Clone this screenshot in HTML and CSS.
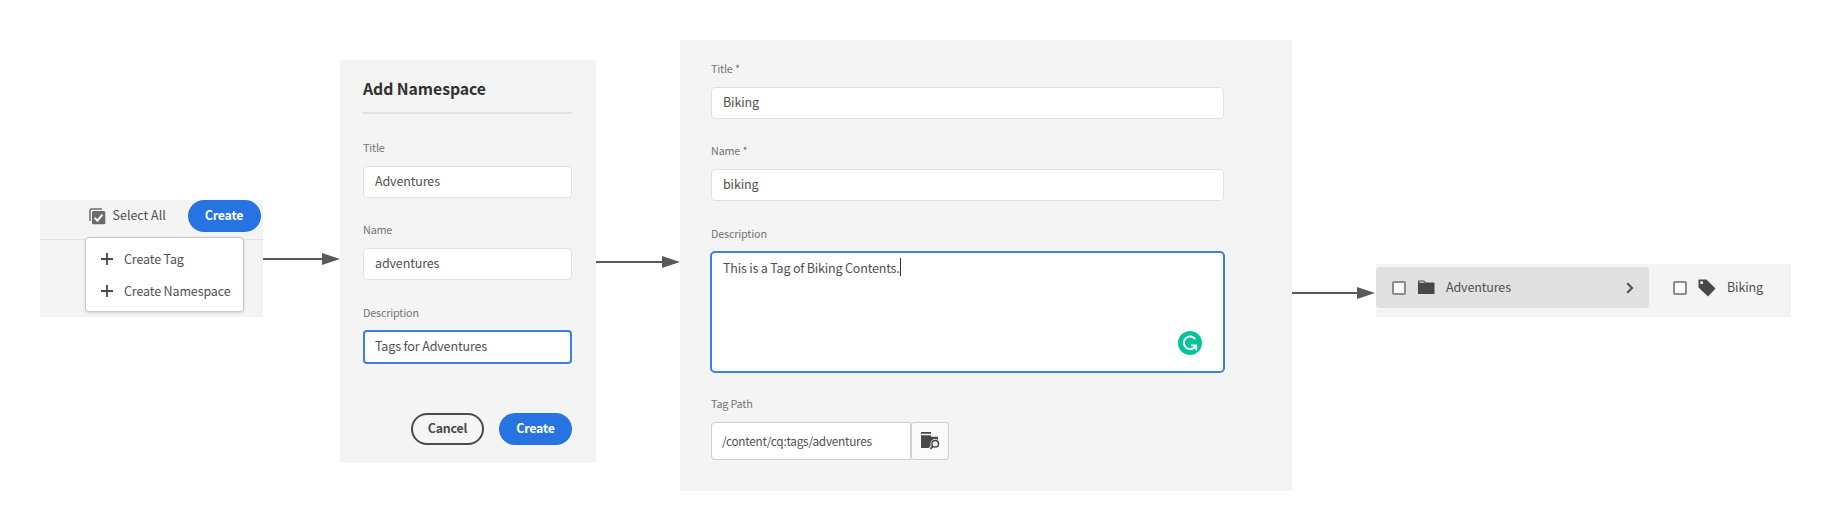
FILE: index.html
```html
<!DOCTYPE html>
<html lang="en">
<head>
<meta charset="utf-8">
<title>Create tags</title>
<link rel="stylesheet" href="styles.css">
</head>
<body>
<main class="board">
  <section class="panel start">
    <div class="toolbar">
      <svg class="select-icon" width="17" height="17" viewBox="0 0 17 17"><path d="M1 13V2.500Q1 1 2.500 1H13" fill="none" stroke="#6a6a6a" stroke-width="1.500"/><rect x="3" y="3" width="13.300" height="13.300" rx="1.500" fill="#6a6a6a"/><path d="M5.600 9.800l2.800 2.900 5-6" fill="none" stroke="#fff" stroke-width="2"/></svg>
      <span class="select-label">Select All</span>
      <button class="btn primary">Create</button>
    </div>
    <div class="menu">
      <div class="menu-item"><svg width="12" height="12" viewBox="0 0 12 12"><path d="M6 0v12M0 6h12" stroke="#484848" stroke-width="1.800"/></svg><span class="menu-text">Create Tag</span></div>
      <div class="menu-item"><svg width="12" height="12" viewBox="0 0 12 12"><path d="M6 0v12M0 6h12" stroke="#484848" stroke-width="1.800"/></svg><span class="menu-text">Create Namespace</span></div>
    </div>
  </section>
  <svg class="arrow arrow-one" width="77" height="12" viewBox="0 0 77 12"><path d="M0 6h60" stroke="#595959" stroke-width="2"/><path d="M59 0l18 6-18 6z" fill="#595959"/></svg>
  <section class="panel namespace">
    <h1 class="heading">Add Namespace</h1>
    <div class="field"><label class="label">Title</label><div class="input">Adventures</div></div>
    <div class="field"><label class="label">Name</label><div class="input">adventures</div></div>
    <div class="field"><label class="label">Description</label><div class="input focused">Tags for Adventures</div></div>
    <div class="actions"><button class="btn outline">Cancel</button><button class="btn primary">Create</button></div>
  </section>
  <svg class="arrow arrow-two" width="84" height="12" viewBox="0 0 84 12"><path d="M0 6h67" stroke="#595959" stroke-width="2"/><path d="M66 0l18 6-18 6z" fill="#595959"/></svg>
  <section class="panel tag-form">
    <div class="field"><label class="label">Title *</label><div class="input">Biking</div></div>
    <div class="field"><label class="label">Name *</label><div class="input">biking</div></div>
    <div class="field"><label class="label">Description</label>
      <div class="textarea"><span class="typed">This is a Tag of Biking Contents.</span><i class="caret"></i>
        <svg class="grammar" width="24" height="24" viewBox="0 0 24 24"><circle cx="12" cy="12" r="12" fill="#07c39a"/><path d="M17.300 8.200A6.300 6.300 0 1 0 17.600 15" fill="none" stroke="#fff" stroke-width="1.900"/><path d="M13 14.300h5.200v5" fill="none" stroke="#fff" stroke-width="1.800"/></svg>
      </div>
    </div>
    <div class="field path-field"><label class="label">Tag Path</label>
      <div class="path"><div class="path-input">/content/cq:tags/adventures</div><div class="path-button">
        <svg width="19" height="18" viewBox="0 0 19 18"><path d="M0 0h10v1.800H0zM0 3.200h9.300l1.500 1.500H17V16H0z" fill="#484848"/><path d="M12.300 13.500l-3 3.400" stroke="#fafafa" stroke-width="3.600"/><circle cx="14.200" cy="11.800" r="3.500" fill="#fafafa" stroke="#fafafa" stroke-width="2.600"/><circle cx="14.200" cy="11.800" r="3.300" fill="none" stroke="#484848" stroke-width="1.500"/><path d="M12 14.100l-2.500 2.700" stroke="#484848" stroke-width="1.900"/></svg>
      </div></div>
    </div>
  </section>
  <svg class="arrow arrow-three" width="84" height="12" viewBox="0 0 84 12"><path d="M0 6h66" stroke="#595959" stroke-width="2"/><path d="M65 0l18 6-18 6z" fill="#595959"/></svg>
  <section class="panel columns">
    <div class="row selected"><i class="check"></i>
      <svg class="folder" width="17" height="15" viewBox="0 0 17 15"><path d="M0 14V1.500Q0 .5 1 .5H6L8 2.500h7.500q1 0 1 1V14z" fill="#484848"/><path d="M1.200 1.500h4.500L7 2.800H1.200z" fill="#ddd"/></svg>
      <span class="row-name">Adventures</span>
      <svg class="chevron" width="8" height="12" viewBox="0 0 8 12"><path d="M1.200 1.300L6 6 1.200 10.700" fill="none" stroke="#505050" stroke-width="2.100"/></svg>
    </div>
    <div class="row"><i class="check"></i>
      <svg class="tag-icon" width="18" height="18" viewBox="0 0 18 18"><path d="M1 .5h7.500L17.500 9.500 10 17.500.5 8.500V1z" fill="#484848"/><rect x="2.300" y="2.300" width="2.700" height="2.700" rx=".7" fill="#fff"/></svg>
      <span class="row-name">Biking</span>
    </div>
  </section>
</main>
</body>
</html>
```
FILE: styles.css
```css
* { box-sizing: border-box; }
body { margin: 0; background: #fff; color: #505050; font: 12.5px/20px "Noto Sans CJK SC", "Open Sans", sans-serif; letter-spacing: -.13px; }
.board { display: flex; align-items: flex-start; height: 531px; padding-left: 40px; overflow: hidden; }
.board svg { display: block; flex: none; }
.panel { flex: none; background: #f4f4f4; }
.arrow-one { margin-top: 253px; }
.arrow-two { margin-top: 256px; }
.arrow-three { margin-top: 287px; }

.btn { width: 73px; height: 32px; padding: 0 0 1px; border: 0; border-radius: 16px; font: 700 12.4px/20px "Noto Sans CJK SC", "Open Sans", sans-serif; letter-spacing: -.2px; }
.primary { background: #2673e1; color: #fff; }
.outline { border: 2px solid #4b4b4b; background: #f5f5f5; color: #4b4b4b; }

.start { position: relative; width: 223px; height: 117px; margin-top: 200px; }
.toolbar { display: flex; height: 40px; padding-left: 49px; border-bottom: 1px solid #e4e4e4; }
.select-icon { margin-top: 8px; }
.select-label { width: 76px; margin: 5px 0 0 6.5px; letter-spacing: 0; white-space: nowrap; }
.toolbar .btn { margin-left: -1px; padding-bottom: 3px; }
.menu { position: absolute; left: 45px; top: 37px; width: 159px; height: 75px; padding: 5px 0 0 15px; border: 1px solid #c8c8c8; border-radius: 4px; background: #fff; box-shadow: 0 1px 3px #0002; }
.menu-item { display: flex; align-items: center; gap: 11px; height: 32px; white-space: nowrap; }
.menu-text { padding-bottom: 1px; }

.namespace { width: 256px; height: 403px; margin-top: 60px; padding: 14px 24px 0 23px; }
.heading { height: 40px; margin: 0 0 24px; border-bottom: 2px solid #e1e1e1; color: #303030; font-size: 15.8px; line-height: 30px; font-weight: 700; letter-spacing: -.06px; }
.field { height: 82.3px; }
.label { display: block; height: 28px; color: #747474; font-size: 10.8px; line-height: 18px; letter-spacing: -.18px; white-space: nowrap; }
.input { height: 32px; padding: 4px 11px; border: 1px solid #e1e1e1; border-radius: 4px; background: #fff; line-height: 20px; white-space: nowrap; }
.focused { height: 34px; margin-top: -1px; padding: 4px 10px; border: 2px solid #3880e4; }
.actions { display: flex; justify-content: flex-end; gap: 15px; margin-top: 28px; }

.tag-form { width: 612px; height: 451px; margin-top: 40px; padding: 19px 68px 0 31px; }
.textarea { position: relative; width: 515px; height: 122px; margin: -1px 0 0 -1px; padding: 5px 11px; border: 2px solid #3880e4; border-radius: 5px; background: #fff; display: flex; }
.typed { white-space: nowrap; letter-spacing: -.18px; }
.caret { width: 1px; height: 18px; background: #333; }
.grammar { position: absolute; left: 466px; top: 78px; }
.path-field { margin-top: 88px; }
.path { display: flex; height: 38px; }
.path-input { width: 200px; padding: 9px 10px; border: 1px solid #cfcfcf; border-radius: 4px 0 0 4px; background: #fff; font-size: 11.8px; line-height: 18px; letter-spacing: -.25px; }
.path-button { display: flex; align-items: center; justify-content: center; width: 38px; border: 1px solid #cfcfcf; border-radius: 3px; background: #fafafa; }

.columns { display: flex; width: 415px; height: 53px; margin-top: 264px; padding-top: 3px; }
.row { display: flex; align-items: center; height: 41px; padding-left: 24px; }
.selected { width: 273px; padding: 0 15px 0 16px; border-radius: 4px; background: #e0e0e0; }
.check { width: 14px; height: 14px; border: 2px solid #8b8b8b; border-radius: 2px; background: #fafafa; }
.folder { margin-left: 12px; }
.row-name { margin-left: 11px; padding-bottom: 2px; white-space: nowrap; }
.chevron { margin-left: auto; }
.tag-icon { margin-left: 11px; }
```
